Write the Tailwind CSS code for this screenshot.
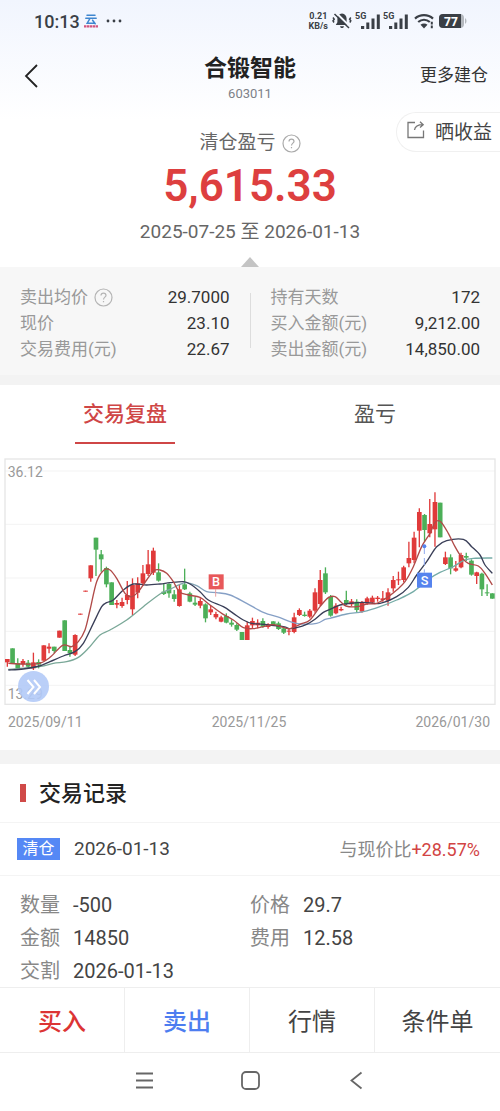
<!DOCTYPE html>
<html lang="zh-CN">
<head>
  <meta charset="UTF-8" />
  <meta name="viewport" content="width=device-width, initial-scale=1.0"/>
  <title>合锻智能 603011</title>
  <script src="https://cdn.jsdelivr.net/npm/@tailwindcss/browser@4"></script>
  <style>
    body { font-family: Roboto, "Noto Sans CJK SC", sans-serif; }
  </style>
</head>
<body class="min-h-screen bg-white text-[#444]">

  <!-- header -->
  <div class="h-[267px] bg-linear-to-b from-[#f1f5fe] via-white via-45% to-white flex flex-col">
    <div class="h-[42px] shrink-0 flex items-center justify-between pl-[34px] pr-[33px] text-[#3a3f46]">
      <div class="flex items-center">
        <span class="text-[18px] font-medium">10:13</span>
        <svg class="ml-1 w-[14px] h-[16px]" viewBox="0 0 14 16" fill="none">
          <path d="M3 2.2h8M1.8 5.2h10.4M6 5.4L3.2 10.2h7.6M8.6 7.2l2.6 3.6" stroke="#3f86cf" stroke-width="1.5" stroke-linecap="round"/>
          <path d="M0 13.4h14" stroke="#d2557f" stroke-width="2.4" stroke-dasharray="2.4 .5"/>
        </svg>
        <svg class="ml-2 w-4 h-1" viewBox="0 0 16 4" fill="#3a3f46"><circle cx="2" cy="2" r="1.4"/><circle cx="8" cy="2" r="1.4"/><circle cx="14" cy="2" r="1.4"/></svg>
      </div>
      <div class="flex items-center">
        <div class="text-[9px] leading-[10px] font-bold text-center">0.21<br>KB/s</div>
        <svg class="ml-1 w-[20px] h-[18px]" viewBox="0 0 20 18">
          <path d="M10 1.5c-3 .4-4.600 2.400-4.600 5v3.800L3.800 13h12.400l-1.600-2.700V6.500c0-2.600-1.600-4.600-4.600-5zM8 14.200h4c-.3 1.300-1 1.900-2 1.900s-1.700-.6-2-1.900z" fill="#3a3f46"/>
          <path d="M4.600 1.200l14 14" stroke="#f4f7fe" stroke-width="2"/>
          <path d="M2.500 2l14.500 14M1 5.500l1.200 1.700L1 8.800l1 1.700M18.800 5.500l-1.200 1.700 1.200 1.600-1 1.700" fill="none" stroke="#3a3f46" stroke-width="1.5"/>
        </svg>
        <svg class="ml-[3px] w-[25px] h-[18px]" viewBox="0 0 25 18" fill="#3a3f46">
          <text x="0" y="7" font-size="9" font-weight="700">5G</text>
          <path d="M6 14h3.200v3H6zM11.300 10.500h3V17h-3zM16.500 6.500h3V17h-3zM21.800 2.500h3V17h-3z"/>
        </svg>
        <svg class="ml-[3px] w-[25px] h-[18px]" viewBox="0 0 25 18" fill="#3a3f46">
          <text x="0" y="7" font-size="9" font-weight="700">5G</text>
          <path d="M6 14h3.200v3H6zM11.300 10.500h3V17h-3zM16.500 6.500h3V17h-3zM21.800 2.500h3V17h-3z"/>
        </svg>
        <svg class="ml-[6px] w-[21px] h-[16px]" viewBox="0 0 21 16" fill="none" stroke="#3a3f46" stroke-width="2.2">
          <path d="M1 5.600c5-4.600 13-4.600 18 0M4.200 9c3.400-3 8.200-3 11.600 0"/>
          <path d="M6.500 11.800c2-1.700 5-1.700 7 0L10 15.400z" fill="#3a3f46" stroke="none"/>
          <path d="M17.800 8.800v2.600M17.800 12.600v2.600" stroke-width="2"/>
        </svg>
        <svg class="ml-[4px] w-[28px] h-[16px]" viewBox="0 0 28 16">
          <rect x="0" y="1" width="25" height="14" rx="4" fill="#b4b8be"/>
          <path d="M26 5c2 1.500 2 4.500 0 6z" fill="#b4b8be"/>
          <path d="M4 1h18v14H4a4 4 0 0 1-4-4V5a4 4 0 0 1 4-4z" fill="#3a3f46"/>
          <text x="12" y="12.5" font-size="12" font-weight="800" fill="#fff" text-anchor="middle">77</text>
        </svg>
      </div>
    </div>

    <div class="h-[68px] shrink-0 grid grid-cols-[1fr_auto_1fr] items-center">
      <button aria-label="返回" class="justify-self-start pl-6">
        <svg class="w-[14px] h-[24px]" viewBox="0 0 14 24" fill="none" stroke="#222" stroke-width="1.8"><path d="M13 1L2 12l11 11"/></svg>
      </button>
      <div class="text-center pt-[3px]">
        <h1 class="text-[23px] leading-[32px] font-bold text-[#222]">合锻智能</h1>
        <p class="text-[13px] leading-[18px] text-[#7d8188]">603011</p>
      </div>
      <a href="#" class="justify-self-end pr-3 text-[17px] text-[#333]">更多建仓</a>
    </div>

    <div class="relative text-center pt-[19px]">
      <div class="flex items-center justify-center gap-[6px] text-[19px] leading-[28px] text-[#666]">
        清仓盈亏
        <svg class="w-[19px] h-[19px]" viewBox="0 0 19 19" fill="none" stroke="#aaa" stroke-width="1.2"><circle cx="9.5" cy="9.5" r="8.5"/><path d="M7 7.600c0-3.400 5-3.200 5-.2 0 1.700-2.500 1.900-2.500 4.100M9.500 13v1.300"/></svg>
      </div>
      <p class="text-[44px] leading-[58px] font-semibold text-[#dd3f3f]">5,615.33</p>
      <p class="text-[19px] leading-[34px] text-[#666]">2025-07-25 至 2026-01-13</p>
      <button class="absolute right-0 top-[2px] h-[40px] w-[104px] flex items-center gap-[10px] pl-[10px] pt-[2px] rounded-l-full bg-white border border-r-0 border-[#f0f0f0] text-[19px] text-[#444] whitespace-nowrap">
        <svg class="mb-[6px] w-[18px] h-[18px] shrink-0" viewBox="0 0 18 18" fill="none" stroke="#777" stroke-width="1.3"><path d="M8 1.500H1V16.500h15.500V9.500M7.500 9c.5-3.500 3-5.300 8.500-5.300M13 .8l3.200 2.900L13 6.600"/></svg>
        晒收益
      </button>
    </div>
    <svg class="mt-auto mx-auto w-[18px] h-[10px]" viewBox="0 0 18 10"><path d="M9 0l9 10H0z" fill="#c4c4c4"/></svg>
  </div>

  <!-- summary -->
  <section class="h-[118px] bg-[#f7f7f7] border-b-10 border-[#f3f3f3] pt-[17px] px-5 flex text-[17px] leading-[26px] text-[#333]">
    <dl class="flex-1 grid grid-cols-[auto_1fr] content-start">
      <dt class="text-[#999] flex items-center gap-[6px]">卖出均价
        <svg class="w-[19px] h-[19px]" viewBox="0 0 19 19" fill="none" stroke="#b5b5b5" stroke-width="1.2"><circle cx="9.5" cy="9.5" r="8.5"/><path d="M7 7.600c0-3.400 5-3.200 5-.2 0 1.700-2.500 1.900-2.500 4.100M9.500 13v1.300"/></svg>
      </dt><dd class="text-right">29.7000</dd>
      <dt class="text-[#999]">现价</dt><dd class="text-right">23.10</dd>
      <dt class="text-[#999]">交易费用(元)</dt><dd class="text-right">22.67</dd>
    </dl>
    <div class="mx-5 mt-[9px] h-[55px] w-px bg-[#ddd]"></div>
    <dl class="flex-1 grid grid-cols-[auto_1fr] content-start">
      <dt class="text-[#999]">持有天数</dt><dd class="text-right">172</dd>
      <dt class="text-[#999]">买入金额(元)</dt><dd class="text-right">9,212.00</dd>
      <dt class="text-[#999]">卖出金额(元)</dt><dd class="text-right">14,850.00</dd>
    </dl>
  </section>

  <!-- tabs -->
  <nav class="grid grid-cols-2 justify-items-center text-[21px] h-[65px]">
    <button class="w-[100px] h-[59px] pt-[3px] border-b-2 border-[#cf4646] font-medium text-[#cf4646] whitespace-nowrap">交易复盘</button>
    <button class="w-[100px] h-[59px] pt-[3px] border-b-2 border-transparent text-[#555]">盈亏</button>
  </nav>

  <!-- k-line chart, drawn by the script below -->
  <section class="relative">
    <svg id="chart" class="block w-full" viewBox="0 0 1500 780" fill="none"></svg>
    <button aria-label="展开" class="absolute left-[18px] bottom-[8px] w-[31px] h-[31px] rounded-full bg-[#b3caf7]/90 flex items-center justify-center">
      <svg class="w-[16px] h-[16px]" viewBox="0 0 16 16" fill="none" stroke="#fff" stroke-width="2"><path d="M1.500 1l6 7-6 7M8 1l6 7-6 7"/></svg>
    </button>
  </section>
  <div class="h-[40px] pl-2 pr-[10px] pt-[2px] flex justify-between text-[14px] leading-[20px] text-[#999]">
    <span>2025/09/11</span><span>2025/11/25</span><span>2026/01/30</span>
  </div>

  <!-- records -->
  <section class="border-t-14 border-[#f3f3f3]">
    <h2 class="h-[58px] pl-5 flex items-center gap-[13px] text-[22px] font-medium text-[#222]">
      <span class="w-[6px] h-[18px] bg-[#d04a48]"></span>交易记录
    </h2>
    <div class="h-[54px] pl-[17px] pr-5 flex items-center border-y border-[#f4f4f4] text-[19px]">
      <span class="w-[43px] h-[22px] bg-[#5588f5] text-white text-[16px] leading-[22px] text-center">清仓</span>
      <span class="ml-[14px]">2026-01-13</span>
      <span class="ml-auto text-[18px] text-[#888]">与现价比<span class="text-[#d24444]">+28.57%</span></span>
    </div>
    <dl class="h-[111px] px-5 pt-[13px] grid grid-cols-2 content-start text-[20px] leading-[33px] overflow-hidden">
      <div class="flex gap-[13px]"><dt class="text-[#888]">数量</dt><dd>-500</dd></div>
      <div class="flex gap-[13px]"><dt class="text-[#888]">价格</dt><dd>29.7</dd></div>
      <div class="flex gap-[13px]"><dt class="text-[#888]">金额</dt><dd>14850</dd></div>
      <div class="flex gap-[13px]"><dt class="text-[#888]">费用</dt><dd>12.58</dd></div>
      <div class="flex gap-[13px]"><dt class="text-[#888]">交割</dt><dd>2026-01-13</dd></div>
    </dl>
  </section>

  <!-- action bar -->
  <div class="h-[66px] grid grid-cols-4 divide-x divide-[#eee] border-y border-[#eee] text-[24px] text-[#444]">
    <button class="pt-1 font-medium text-[#dc3434]">买入</button>
    <button class="pt-1 font-medium text-[#4d7df0]">卖出</button>
    <button class="pt-1">行情</button>
    <button class="pt-1">条件单</button>
  </div>

  <!-- system navigation -->
  <div class="h-[54px] flex items-center justify-center gap-[87px]">
    <button aria-label="菜单"><svg class="w-[19px] h-[19px]" viewBox="0 0 19 19" stroke="#666" stroke-width="1.8"><path d="M1 2.500h17M1 9.500h17M1 16.500h17"/></svg></button>
    <button aria-label="主页"><svg class="w-[19px] h-[19px]" viewBox="0 0 19 19" fill="none" stroke="#666" stroke-width="1.8"><rect x="1" y="1" width="17" height="17" rx="4"/></svg></button>
    <button aria-label="返回"><svg class="w-[19px] h-[19px]" viewBox="0 0 19 19" fill="none" stroke="#666" stroke-width="1.8"><path d="M14.500 1.500L4.500 9.500l10 8"/></svg></button>
  </div>

  <script>
    // [up/down, high, body top, body bottom, low]
    const candles = [
      ['r',627,627,637,650],['g',595,595,640,642],['g',625,640,656,656],['r',627,633,643,650],['g',630,638,650,655],
      ['r',608,637,655,660],['g',628,636,644,655],['r',586,586,632,632],['r',580,590,596,610],['g',590,590,603,610],
      ['r',542,542,563,563],['g',511,511,603,603],['g',588,600,610,620],['r',553,555,614,618],['r',491,491,494,494],
      ['r',422,422,425,425],['r',346,346,385,395],['g',263,263,299,378],['g',300,313,328,365],['g',350,354,403,412],
      ['g',397,397,465,465],['r',450,459,464,475],['r',443,456,468,473],['r',393,435,450,463],['r',385,405,478,495],
      ['r',382,400,428,445],['r',345,370,400,408],['r',300,343,372,378],['r',293,302,368,375],['g',340,367,392,395],
      ['g',400,425,432,435],['g',400,402,430,443],['g',420,433,447,455],['r',405,418,468,470],['g',356,403,418,420],
      ['g',425,430,455,457],['g',440,458,464,468],['r',445,453,467,475],['g',460,463,505,517],['r',468,478,487,495],
      ['r',485,492,502,508],['r',497,502,515,517],['g',490,498,518,520],['g',508,518,524,530],['g',520,525,539,543],
      ['g',546,546,570,570],['r',515,526,570,570],['r',503,513,526,535],['r',508,518,526,535],['g',505,513,530,533],
      ['r',520,523,531,536],['g',514,514,525,525],['g',515,520,537,540],['g',530,535,548,552],['r',535,542,545,556],
      ['r',488,502,546,550],['r',475,480,495,498],['g',485,494,498,500],['r',477,482,500,505],['r',415,427,482,488],
      ['r',360,390,462,468],['g',352,370,427,432],['g',435,440,497,500],['r',460,467,490,493],['r',470,477,481,484],
      ['g',422,450,462,465],['r',447,454,463,468],['g',448,455,480,488],['r',453,457,485,488],['r',440,445,460,464],
      ['r',437,443,458,462],['r',438,443,447,455],['r',423,445,450,455],['r',415,427,452,467],['r',378,390,415,425],
      ['r',365,388,391,405],['r',347,352,390,397],['r',275,324,340,352],['r',245,263,330,340],['r',175,186,242,292],
      ['g',192,195,240,275],['r',147,222,250,262],['r',127,156,238,290],['g',158,158,262,262],['r',305,322,342,345],
      ['g',313,322,355,373],['r',333,355,362,365],['r',308,315,352,355],['g',308,318,323,333],['g',328,332,374,377],
      ['r',365,367,378,402],['g',368,371,418,438],['g',403,427,430,438],['g',430,430,446,446]
    ];
    const shortMa = [[25,640],[70,642],[118,640],[150,622],[188,586],[215,590],[235,575],[255,540],[270,480],[290,395],[312,360],[330,360],[350,385],[375,430],[395,440],[415,425],[440,390],[462,362],[480,360],[500,370],[520,395],[538,425],[565,435],[600,442],[630,465],[665,490],[700,510],[730,533],[760,536],[790,530],[820,524],[850,532],[870,536],[900,523],[930,510],[960,470],[985,443],[1005,440],[1022,455],[1038,468],[1070,470],[1100,462],[1130,460],[1165,440],[1190,420],[1215,395],[1240,350],[1265,290],[1290,250],[1305,217],[1322,215],[1345,250],[1365,290],[1385,322],[1405,340],[1435,348],[1455,370],[1477,405]];
    const midMa = [[25,660],[70,657],[118,648],[150,635],[190,618],[225,605],[250,580],[280,520],[305,470],[320,458],[340,450],[370,420],[400,402],[440,405],[480,402],[510,398],[550,395],[570,402],[600,425],[625,450],[670,470],[700,490],[730,510],[755,520],[790,523],[850,530],[870,536],[890,533],[920,523],[945,508],[970,487],[990,478],[1020,465],[1050,460],[1090,457],[1140,460],[1190,440],[1225,412],[1250,375],[1280,335],[1310,290],[1340,272],[1390,268],[1415,290],[1440,315],[1455,345],[1477,370]];
    const longMa = [[25,658],[118,650],[160,640],[200,635],[235,622],[265,595],[300,555],[330,540],[380,510],[430,470],[480,432],[510,418],[540,403],[560,398],[590,407],[620,425],[650,428],[690,435],[740,460],[790,487],[840,503],[870,515],[900,522],[950,520],[975,508],[990,505],[1040,492],[1090,485],[1140,470],[1190,450],[1240,425],[1290,385],[1320,367],[1360,350],[1390,332],[1420,325],[1477,324]];

    // smooth curve through all the points
    function curve(p) {
      let d = `M${p[0]}`;
      for (let i = 0; i < p.length - 1; i++) {
        const a = p[i - 1] || p[i], b = p[i], c = p[i + 1], e = p[i + 2] || c;
        d += `C${b[0] + (c[0] - a[0]) / 6},${b[1] + (c[1] - a[1]) / 6} ${c[0] - (e[0] - b[0]) / 6},${c[1] - (e[1] - b[1]) / 6} ${c}`;
      }
      return d;
    }

    let out = `<defs><linearGradient id="long" gradientUnits="userSpaceOnUse" x1="480" x2="1150">
      <stop offset="0" stop-color="#7aa898"/><stop offset=".25" stop-color="#86a0c6"/><stop offset=".75" stop-color="#86a0c6"/><stop offset="1" stop-color="#74aba6"/>
    </linearGradient></defs>`;
    [63, 223, 384, 544, 706].forEach(y => out += `<path d="M15 ${y}H1485" stroke="#f3f3f3" stroke-width="3"/>`);
    out += `<rect x="15" y="27" width="1470" height="736" stroke="#e6e6e6" stroke-width="4"/>`;
    out += `<g font-size="42" fill="#999"><text x="23" y="81">36.12</text><text x="23" y="746">13.29</text></g>`;

    candles.forEach(([dir, high, top, bottom, low], i) => {
      const x = 22 + i * 15.645;
      const color = dir === 'r' ? '#e03a3a' : '#4caf58';
      out += `<path d="M${x} ${high}V${low}" stroke="${color}" stroke-width="4"/>`;
      out += `<rect x="${x - 7}" y="${top}" width="14" height="${bottom - top}" fill="${color}"/>`;
    });
    out += `<path d="${curve(longMa)}" stroke="url(#long)" stroke-width="4"/>`;
    out += `<path d="${curve(midMa)}" stroke="#3a3f58" stroke-width="4"/>`;
    out += `<path d="${curve(shortMa)}" stroke="#b04a48" stroke-width="4"/>`;

    // buy and sell marks
    out += `<path d="M647 418V440" stroke="#e9a0a0" stroke-width="3"/><rect x="626" y="373" width="45" height="45" fill="#e8585a"/>`;
    out += `<path d="M1273 290V368" stroke="#8fa9ee" stroke-width="3" stroke-dasharray="22 12"/><circle cx="1273" cy="289" r="6" fill="#5583ee"/><rect x="1251" y="368" width="45" height="45" fill="#5583ee"/>`;
    out += `<g font-size="38" font-weight="500" fill="#fff" text-anchor="middle"><text x="648" y="409">B</text><text x="1274" y="404">S</text></g>`;
    document.getElementById('chart').innerHTML = out;
  </script>

</body>
</html>
